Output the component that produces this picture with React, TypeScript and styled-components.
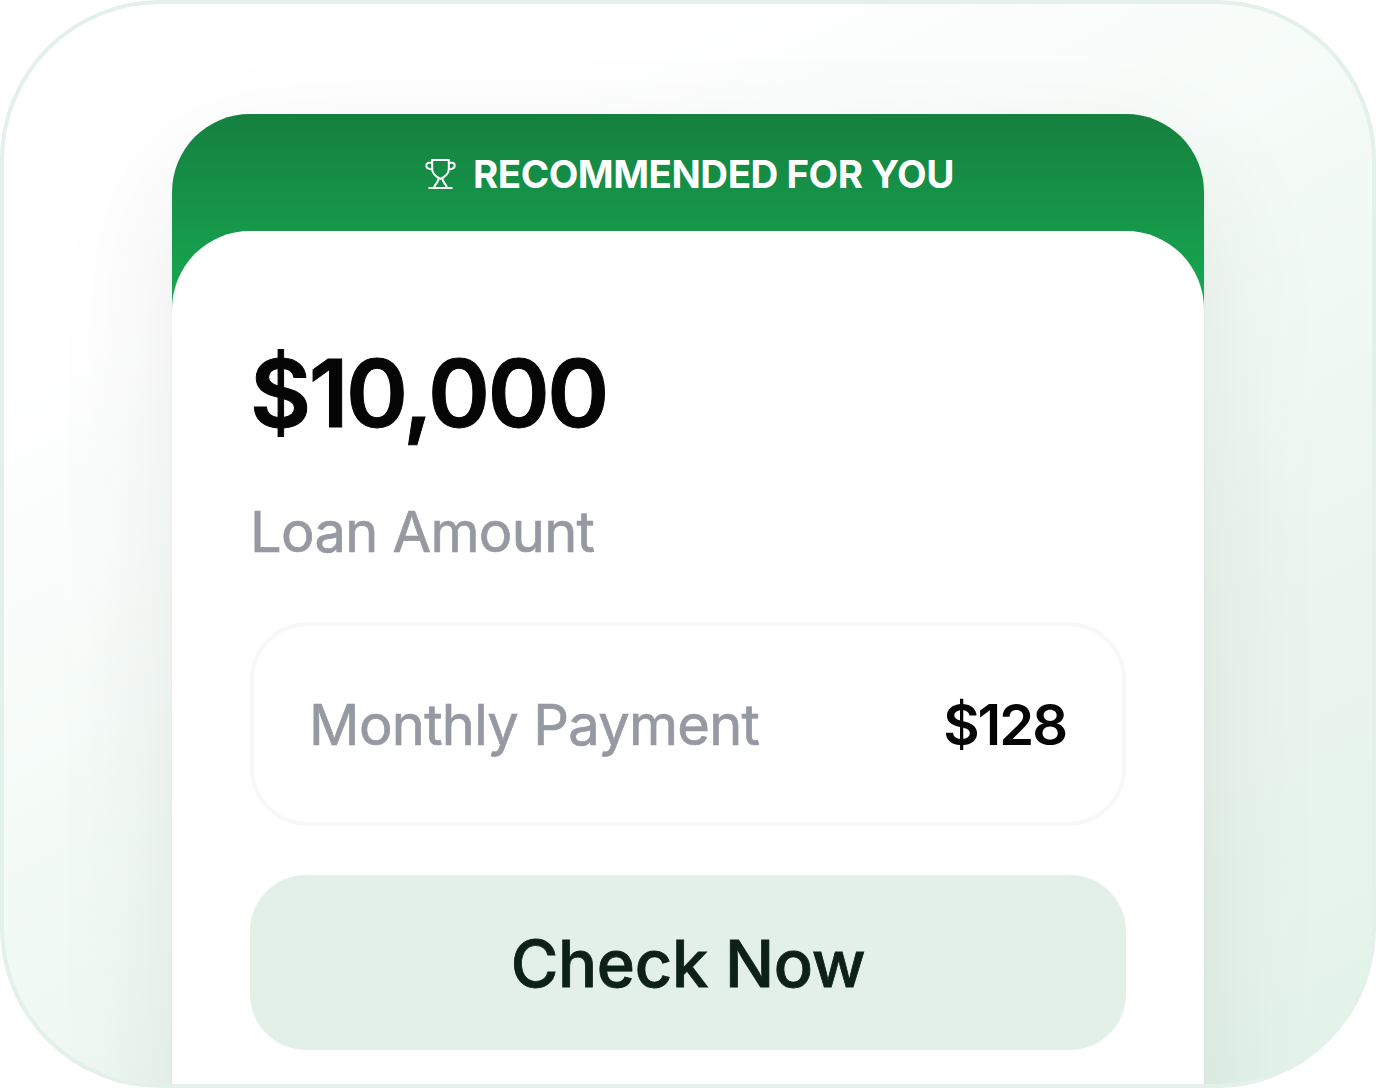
import React from "react";
import styled, { createGlobalStyle } from "styled-components";

const GlobalStyle = createGlobalStyle`
  * { box-sizing: border-box; }
  body { margin: 0; background: #fff; font-family: Inter, "Liberation Sans", sans-serif; }
`;

const Frame = styled.main`
  width: 1376px;
  height: 1088px;
  padding: 110px 168px 0;
  overflow: hidden;
  border: 4px solid #e3f1ea;
  border-radius: 160px;
  background: linear-gradient(152deg, #ffffff 20%, #f4fbf7 46%, #eaf5ee 72%, #e3f3e9 100%);
`;

const Card = styled.section`
  height: 1100px;
  border-radius: 78px 78px 0 0;
  background: linear-gradient(180deg, #15803e 0, #169349 90px, #16a750 180px);
  box-shadow: 0 50px 130px rgba(0, 0, 0, 0.08), 0 4px 5px rgba(0, 0, 0, 0.03);
`;

const Banner = styled.header`
  height: 117px;
  display: flex;
  align-items: center;
  justify-content: center;
  gap: 17px;
  padding: 3px 0 0 3px;
  color: #fff;
`;

const Trophy = styled.svg`
  width: 31px;
  height: 32px;
  flex: none;
`;

const Text = styled.span<{ $size: number; $weight: number; $track: number; $color: string; $stroke?: number }>`
  font-size: ${(p) => p.$size}px;
  font-weight: ${(p) => p.$weight};
  letter-spacing: ${(p) => p.$track}px;
  color: ${(p) => p.$color};
  -webkit-text-stroke: ${(p) => p.$stroke ?? 0}px ${(p) => p.$color};
  line-height: 1.2;
  white-space: nowrap;
`;

const Body = styled.div`
  height: 983px;
  padding: 106px 78px 0;
  display: flex;
  flex-direction: column;
  border-radius: 78px 78px 0 0;
  background: #fff;
`;

const Summary = styled.div`
  display: flex;
  flex-direction: column;
  gap: 49px;
  height: 285px;
`;

const PaymentRow = styled.div`
  display: flex;
  align-items: center;
  justify-content: space-between;
  height: 204px;
  padding: 3px 56px 0 55px;
  border: 4px solid #f6f8f8;
  border-radius: 58px;
`;

const CheckButton = styled.button`
  height: 175px;
  margin: 49px 0 0;
  padding: 2px 0 0;
  border: 0;
  border-radius: 56px;
  background: #e3f0e7;
  font-family: inherit;
`;

export default function App() {
  return (
    <>
      <GlobalStyle />
      <Frame>
        <Card>
          <Banner>
            <Trophy viewBox="0 0 31 32" fill="none" stroke="currentColor" strokeWidth="2">
              <path d="M7.2 2H23.8V11C23.8 15 20.5 18.5 15.5 20.8C10.5 18.5 7.2 15 7.2 11Z" />
              <path d="M7 4.8H4C2.3 4.8 1.3 6 1.3 7.6C1.3 10.2 4 11.4 7.5 11.4M24 4.8H27C28.7 4.8 29.7 6 29.7 7.6C29.7 10.2 27 11.4 23.5 11.4" />
              <path d="M13.5 20.3C13.8 25 9.8 25 9 30M17.5 20.3C17.2 25 21.2 25 22 30M3.5 30H27.5" />
            </Trophy>
            <Text $size={38.5} $weight={700} $track={-0.5} $color="#fff">RECOMMENDED FOR YOU</Text>
          </Banner>
          <Body>
            <Summary>
              <Text $size={94} $weight={600} $track={-2.4} $stroke={1} $color="#050505">$10,000</Text>
              <Text $size={56} $weight={400} $track={-0.7} $stroke={0.7} $color="#9699a1">Loan Amount</Text>
            </Summary>
            <PaymentRow>
              <Text $size={56} $weight={400} $track={-0.7} $stroke={0.7} $color="#9699a1">Monthly Payment</Text>
              <Text $size={56} $weight={600} $track={-2} $color="#050505">$128</Text>
            </PaymentRow>
            <CheckButton>
              <Text $size={65} $weight={500} $track={-0.3} $stroke={0.8} $color="#0d2117">Check Now</Text>
            </CheckButton>
          </Body>
        </Card>
      </Frame>
    </>
  );
}
